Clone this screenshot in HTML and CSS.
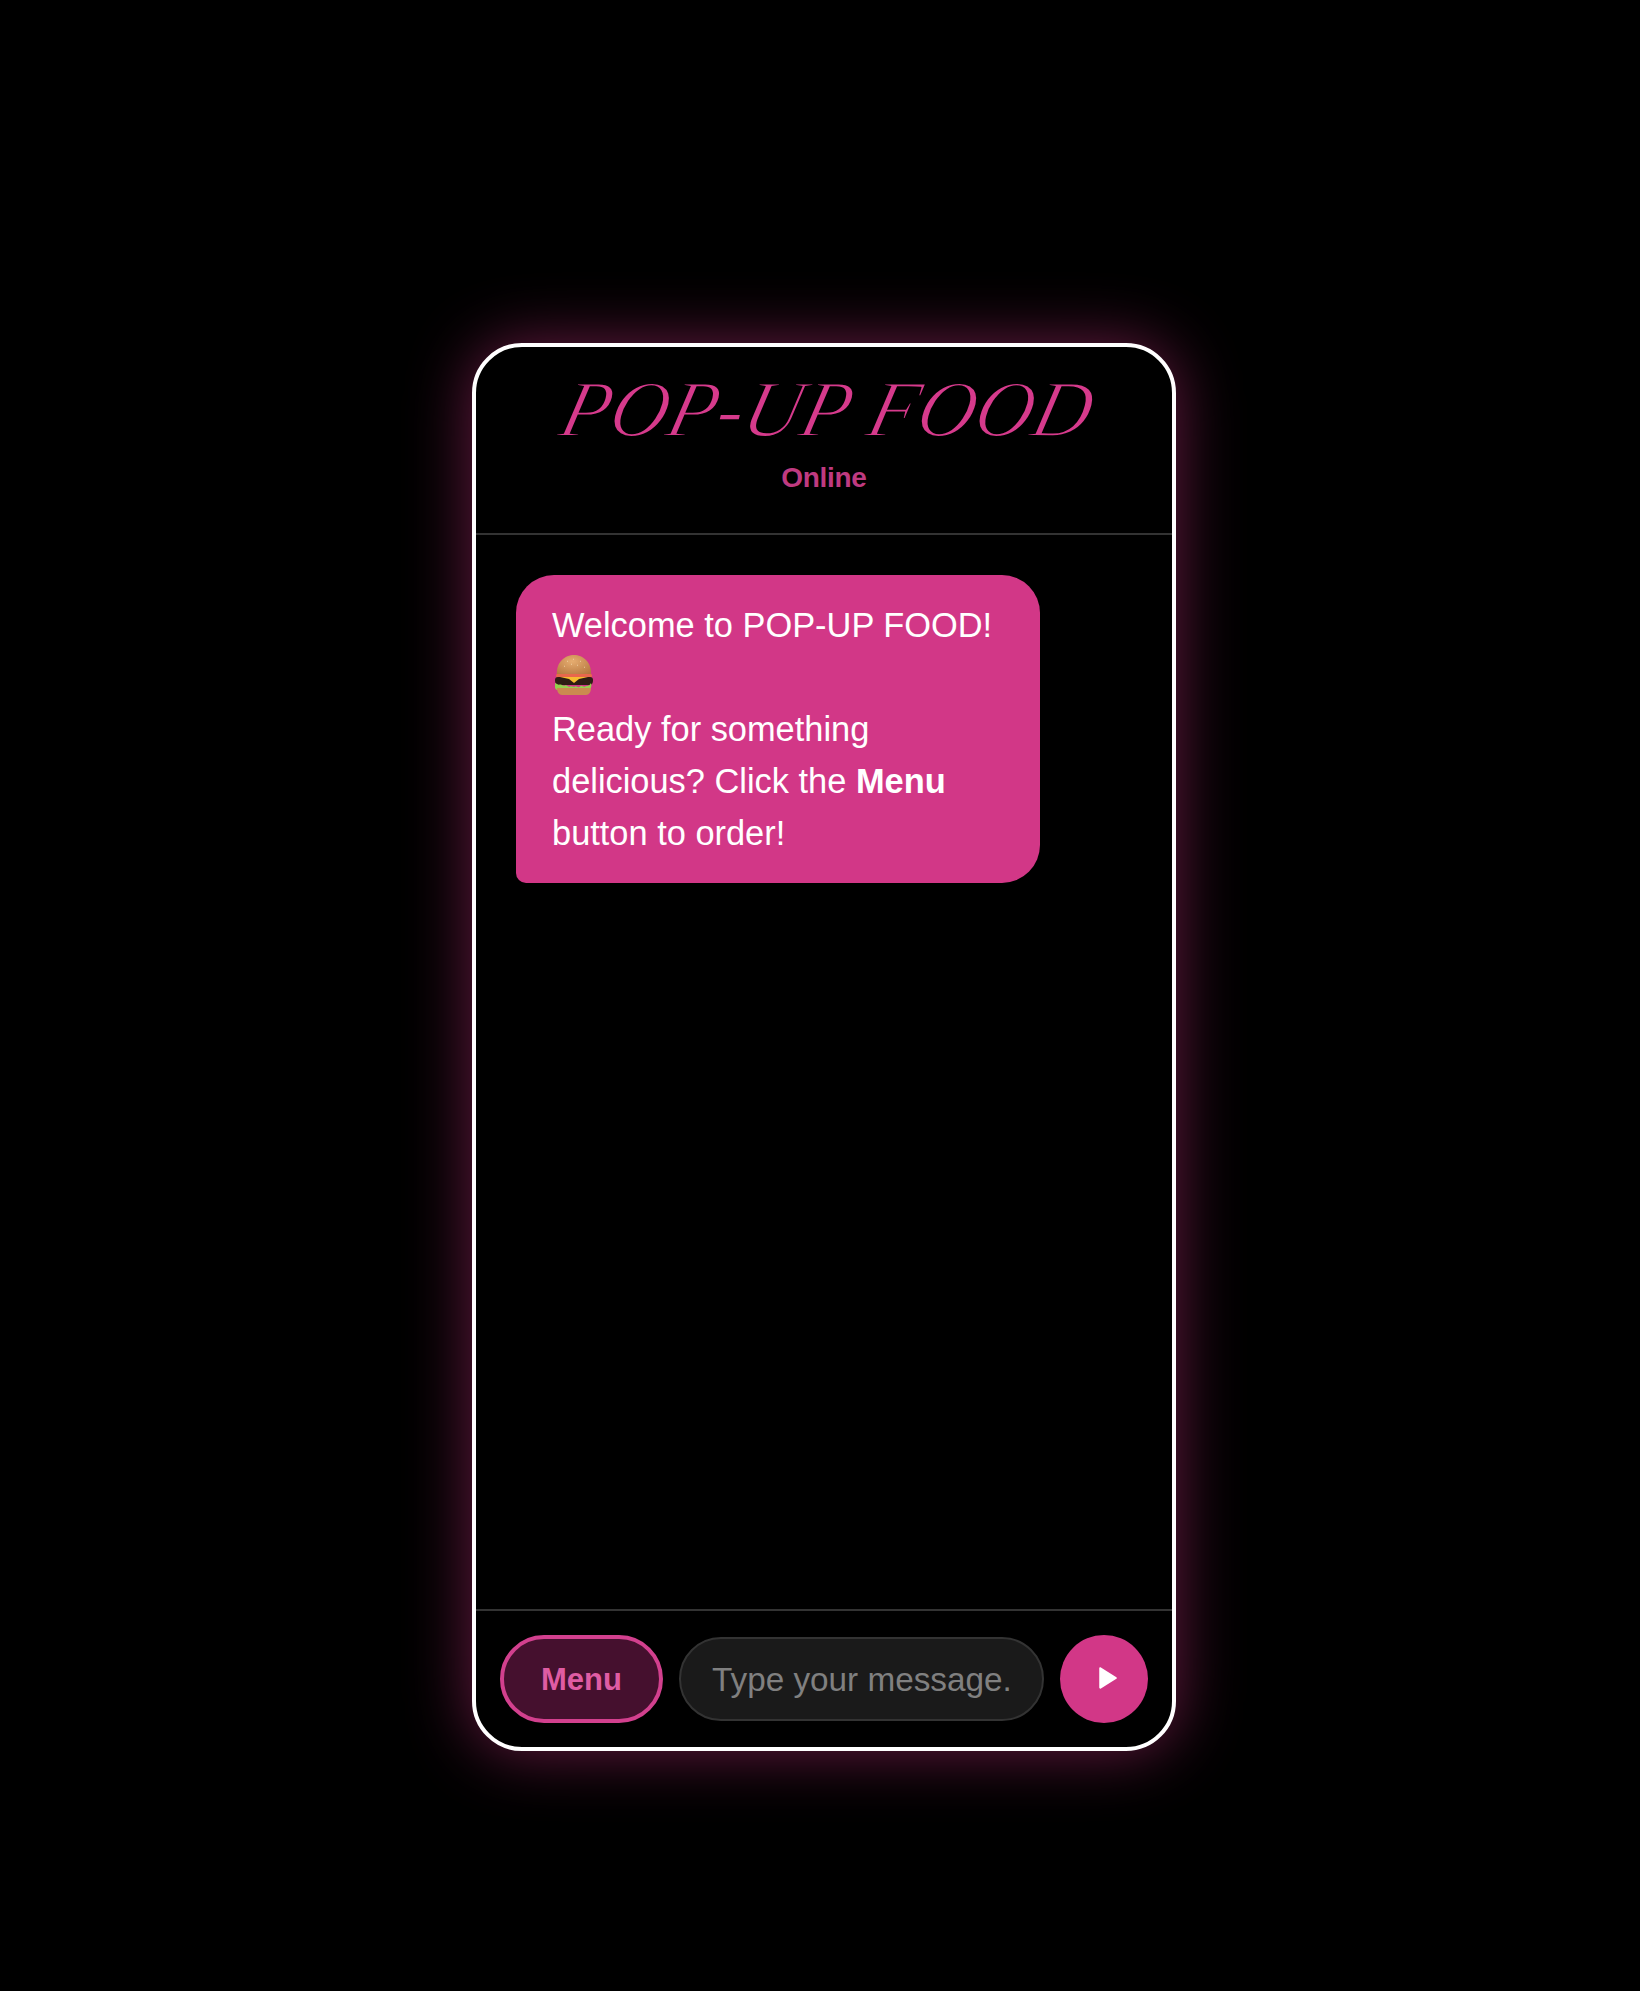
FILE: index.html
```html
<!DOCTYPE html>
<html lang="en">
<head>
    <meta charset="UTF-8">
    <meta name="viewport" content="width=device-width, initial-scale=1.0">
    <title>POP-UP FOOD</title>
    <link rel="stylesheet" href="styles.css">
</head>
<body>
    <div class="phone">
        <div class="header">
            <h1 class="title">POP-UP FOOD</h1>
            <div class="status">Online</div>
        </div>
        <div class="messages">
            <div class="bubble">
                Welcome to POP-UP FOOD!
                <svg class="burger" viewBox="0 0 38 40" role="img" aria-label="hamburger">
                    <defs>
                        <radialGradient id="bun" cx="45%" cy="30%" r="75%">
                            <stop offset="0" stop-color="#e6ad70"/>
                            <stop offset="1" stop-color="#b5763f"/>
                        </radialGradient>
                    </defs>
                    <path d="M2 20C1 7 10 0 19 0s18 7 17 20c0 1-1 1-2 1H4c-1 0-2 0-2-1z" fill="url(#bun)"/>
                    <path d="M12 6l1 .6M18 4l1 .5M25 6l1 .6M9 11l1 .5M16 9l1 .5M22 10l1 .5M29 12l1 .5" stroke="#f3d9ae" stroke-width=".8"/>
                    <path d="M2 19h34c1.500 0 1.500 4-1 4H3c-2.500 0-2.500-4-1-4z" fill="#e8674c"/>
                    <path d="M3 22h32c2 0 3 1 3 3 0 3-1 5-4 5H4c-3 0-4-2-4-5 0-2 1-3 3-3z" fill="#2e1c14"/>
                    <path d="M5 22h28l-9 2-5 4-5-4z" fill="#f6bb30"/>
                    <path d="M0 28c2 1 3 2 5 1.500s3 2 5 1 3 2 5 1 3 1 5 0 3 2 5 0 3 1 5 0 4 0 6-3.500c1 3 0 7-3 7H3c-3 0-4-4-3-7z" fill="#94cf4e"/>
                    <path d="M2 33h34c0 4-2 7-5 7H7c-3 0-5-3-5-7z" fill="#cb8a50"/>
                </svg>
                <br>
                Ready for something delicious? Click the <strong>Menu</strong> button to order!
            </div>
        </div>
        <div class="footer">
            <button class="menu-btn">Menu</button>
            <input class="msg-input" type="text" placeholder="Type your message...">
            <button class="send-btn" aria-label="Send">
                <svg viewBox="0 0 18 22" width="20" height="24">
                    <path d="M1 2.200v17.600c0 .8.8 1.200 1.500.8l14.200-8.800c.6-.4.6-1.200 0-1.600L2.500 1.400C1.800 1 1 1.400 1 2.200z" fill="#fff"/>
                </svg>
            </button>
        </div>
    </div>
</body>
</html>
```
FILE: styles.css
```css
* {
    box-sizing: border-box;
}

body {
    margin: 0;
    height: 1991px;
    padding: 343px 0 0 472px;
    background: #000;
    font-family: "Liberation Sans", Arial, sans-serif;
    overflow: hidden;
}

.phone {
    width: 704px;
    height: 1408px;
    display: flex;
    flex-direction: column;
    background: #000;
    border: 4px solid #fff;
    border-radius: 50px;
    box-shadow: 0 0 64px rgba(214, 54, 136, 0.5);
}

.header {
    height: 188px;
    padding-top: 18px;
    display: flex;
    flex-direction: column;
    align-items: center;
    border-bottom: 2px solid #333;
}

.title {
    margin: 0 0 0 8px;
    font-family: "Liberation Serif", "Times New Roman", serif;
    font-style: italic;
    font-weight: normal;
    font-size: 80px;
    line-height: 88px;
    color: #d63a8c;
    white-space: nowrap;
    transform: skewX(-14deg);
    -webkit-text-stroke: 1.8px #000;
}

.status {
    margin-top: 9px;
    font-size: 28px;
    font-weight: bold;
    letter-spacing: -0.3px;
    color: #bf3a80;
}

.messages {
    flex: 1;
    padding: 40px;
}

.bubble {
    width: 524px;
    padding: 24px 36px;
    background: #d23787;
    color: #fff;
    font-size: 34.4px;
    line-height: 52px;
    border-radius: 38px 38px 38px 10px;
}

.burger {
    width: 38px;
    height: 40px;
    vertical-align: -6px;
    margin-left: 3px;
}

.footer {
    display: flex;
    align-items: center;
    gap: 16px;
    height: 138px;
    padding: 0 24px;
    border-top: 2px solid #333;
}

.menu-btn {
    width: 163px;
    height: 88px;
    flex: none;
    padding: 2px 0 0;
    background: #45102e;
    border: 4px solid #d2408e;
    border-radius: 44px;
    color: #df5ca3;
    font-family: inherit;
    font-size: 31px;
    font-weight: bold;
    cursor: pointer;
}

.msg-input {
    flex: 1;
    min-width: 0;
    height: 84px;
    padding: 2px 31px 0;
    background: #1a1a1a;
    border: 2px solid #333;
    border-radius: 42px;
    color: #fff;
    font-family: inherit;
    font-size: 33.3px;
    outline: none;
}

.msg-input::placeholder {
    color: #808080;
    opacity: 1;
}

.send-btn {
    width: 88px;
    height: 88px;
    flex: none;
    display: flex;
    align-items: center;
    justify-content: center;
    padding: 0 0 2px 8px;
    background: #d23787;
    border: none;
    border-radius: 50%;
    cursor: pointer;
}
```
